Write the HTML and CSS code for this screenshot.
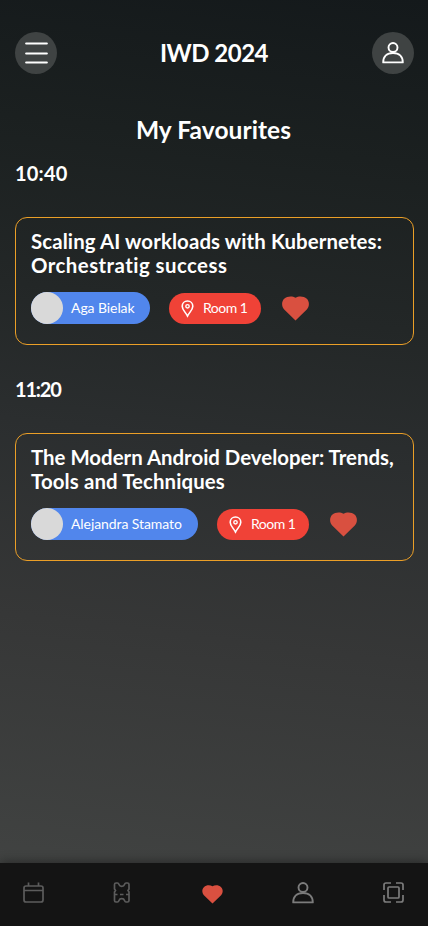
FILE: index.html
```html
<!DOCTYPE html>
<html lang="en">
<head>
<meta charset="utf-8">
<meta name="viewport" content="width=device-width, initial-scale=1">
<title>IWD 2024</title>
<link rel="stylesheet" href="styles.css">
</head>
<body>
<svg class="defs" aria-hidden="true">
  <symbol id="heart" viewBox="0 0 27 25"><path d="M13.500 24.500 2.200 13.500C-.6 10.500-.6 5.500 2.200 2.800 5.200-.1 10.200-.3 13.500 1.700 16.800-.3 21.800-.1 24.800 2.800 27.600 5.500 27.600 10.500 24.800 13.500Z" fill="#d95040"/></symbol>
  <symbol id="person" viewBox="0 0 22 22"><g fill="none" stroke="currentColor" stroke-width="1.900"><circle cx="11" cy="5.500" r="4.500"/><path d="M1.200 20.400C1.200 14.600 5 11 11 11s9.800 3.600 9.800 9.400Z" stroke-linejoin="round"/></g></symbol>
  <symbol id="pin" viewBox="0 0 13 18"><path d="M6.500 1C3.500 1 1.200 3.300 1.200 6.200c0 3.500 3 5.600 5.300 9.800 2.300-4.200 5.300-6.300 5.300-9.800C11.800 3.300 9.500 1 6.500 1Z" fill="none" stroke="#fff" stroke-width="1.600"/><circle cx="6.500" cy="6.300" r="1.700" fill="none" stroke="#fff" stroke-width="1.400"/></symbol>
</svg>
<div class="screen">
  <header class="topbar">
    <button class="round" aria-label="Menu"><svg width="23" height="22" viewBox="0 0 23 22"><path d="M1.200 1.500H21.800M1.200 11.500H21.800M1.200 20.500H21.800" stroke="#fff" stroke-width="2.200" stroke-linecap="round"/></svg></button>
    <h1>IWD 2024</h1>
    <button class="round" aria-label="Profile"><svg width="22" height="22"><use href="#person"/></svg></button>
  </header>
  <main>
    <h2>My Favourites</h2>
    <section>
      <h3>10:40</h3>
      <article class="card">
        <h4><span class="t1">Scaling AI workloads with Kubernetes:</span><br><span class="t2">Orchestratig success</span></h4>
        <div class="meta">
          <div class="speaker"><i class="avatar"></i><span>Aga Bielak</span></div>
          <div class="room"><svg width="13" height="18"><use href="#pin"/></svg><span>Room 1</span></div>
          <svg class="fav" width="27" height="25"><use href="#heart"/></svg>
        </div>
      </article>
    </section>
    <section>
      <h3 class="second">11:20</h3>
      <article class="card">
        <h4><span class="t3">The Modern Android Developer: Trends,</span><br><span class="t4">Tools and Techniques</span></h4>
        <div class="meta">
          <div class="speaker long"><i class="avatar"></i><span>Alejandra Stamato</span></div>
          <div class="room"><svg width="13" height="18"><use href="#pin"/></svg><span>Room 1</span></div>
          <svg class="fav" width="27" height="25"><use href="#heart"/></svg>
        </div>
      </article>
    </section>
  </main>
  <nav class="tabs">
    <svg width="22" height="22" viewBox="0 0 22 22" class="dim"><path d="M3 4H18Q20 4 20 6V18Q20 20 18 20H3Q1 20 1 18V6Q1 4 3 4ZM1 8.500H20M5.500 .5V4M15.500 .5V4"/></svg>
    <svg width="18" height="22" viewBox="0 0 18 22" class="dim ticket"><path d="M3 1H4.500Q5.500 1 6 2.500C6.800 5 10.700 5 11.500 2.500Q12 1 13 1H14.500Q16 1 16 2.500V7L15 8.500L16 10V18.500Q16 20 14.500 20H13Q12 20 11.500 18.500C10.700 16 6.800 16 6 18.500Q5.500 20 4.500 20H3Q1.500 20 1.500 18.500V10L2.500 8.500L1.500 7V2.500Q1.500 1 3 1ZM2 12.500H4.500M7 12.500H10.500M13 12.500H15.500"/></svg>
    <svg width="21" height="19" class="active"><use href="#heart"/></svg>
    <svg width="22" height="22" class="profile"><use href="#person"/></svg>
    <svg width="22" height="22" viewBox="0 0 22 22" class="scan"><path d="M1 8V3Q1 1 3 1H8M13 1H18Q20 1 20 3V8M20 13V18Q20 20 18 20H13M8 20H3Q1 20 1 18V13"/><rect x="5" y="5" width="11" height="11" rx="1"/></svg>
  </nav>
</div>
</body>
</html>
```
FILE: styles.css
```css
* { box-sizing: border-box; margin: 0; padding: 0; }
body { font-family: Lato, sans-serif; color: #fff; background: #141414; font-variant-ligatures: none; }
.defs { position: absolute; width: 0; height: 0; }
.screen {
  height: 926px; display: flex; flex-direction: column; overflow: hidden;
  background: linear-gradient(187deg, #14191b 0%, #1b2020 17%, #232727 34%, #2b2e2f 48%, #363737 68%, #414342 94%);
}
svg { display: block; flex: none; }
.topbar { display: flex; justify-content: space-between; align-items: center; padding: 32px 14px 0 15px; height: 74px; }
.round { width: 42px; height: 42px; border: 0; border-radius: 50%; background: #3f4343; color: #fff; display: flex; align-items: center; justify-content: center; }
h1, h2, h3, h4 { font-weight: 700; white-space: nowrap; }
h1 { font-size: 24px; line-height: 30px; letter-spacing: -.5px; padding-right: 1px; }
main { flex: 1; padding: 40px 14px 0 15px; }
h2 { font-size: 24.5px; line-height: 32px; text-align: center; letter-spacing: .08px; padding-right: 2px; }
h3 { font-size: 20px; line-height: 24px; margin: 15px 0 32px; letter-spacing: .2px; }
h3.second { margin-top: 32px; letter-spacing: -1.2px; }
.card { height: 128px; border: 1px solid #eb9f27; border-radius: 12px; padding: 11px 15px; }
h4 { font-size: 20.4px; line-height: 24px; }
.t1 { letter-spacing: .11px; }
.t2 { letter-spacing: .46px; }
.t4 { letter-spacing: .12px; }
.meta { display: flex; align-items: center; margin-top: 15px; height: 32px; }
.speaker { display: flex; align-items: center; gap: 8px; width: 119px; height: 32px; border-radius: 16px; background: #5186ec; font-size: 14px; letter-spacing: -.08px; white-space: nowrap; }
.speaker span { padding-bottom: 2px; }
.speaker.long { width: 167px; }
.avatar { width: 32px; height: 32px; border-radius: 50%; background: #d9d9d9; }
.room { display: flex; align-items: center; gap: 9px; width: 91.5px; height: 31px; margin: 1px 0 0 19px; padding-left: 12px; border-radius: 16px; background: #f04237; font-size: 14px; letter-spacing: -.5px; white-space: nowrap; }
.room span { padding-bottom: 3px; }
.fav { margin-left: 21.5px; }
.tabs { height: 63px; flex: none; display: flex; justify-content: space-between; align-items: flex-start; padding: 19px 23px 0; background: #141414; box-shadow: 0 -1px 10px rgba(0,0,0,.4); }
.tabs svg { fill: none; stroke-width: 1.700; }
.dim { stroke: #5c5c5c; }
.ticket { margin-left: -2px; }
.tabs .active { margin-top: 3px; margin-left: 1px; margin-right: -1px; }
.profile { color: #7c7c7c; margin-left: 1px; margin-right: -1px; }
.scan { stroke: #7c7c7c; }
```
